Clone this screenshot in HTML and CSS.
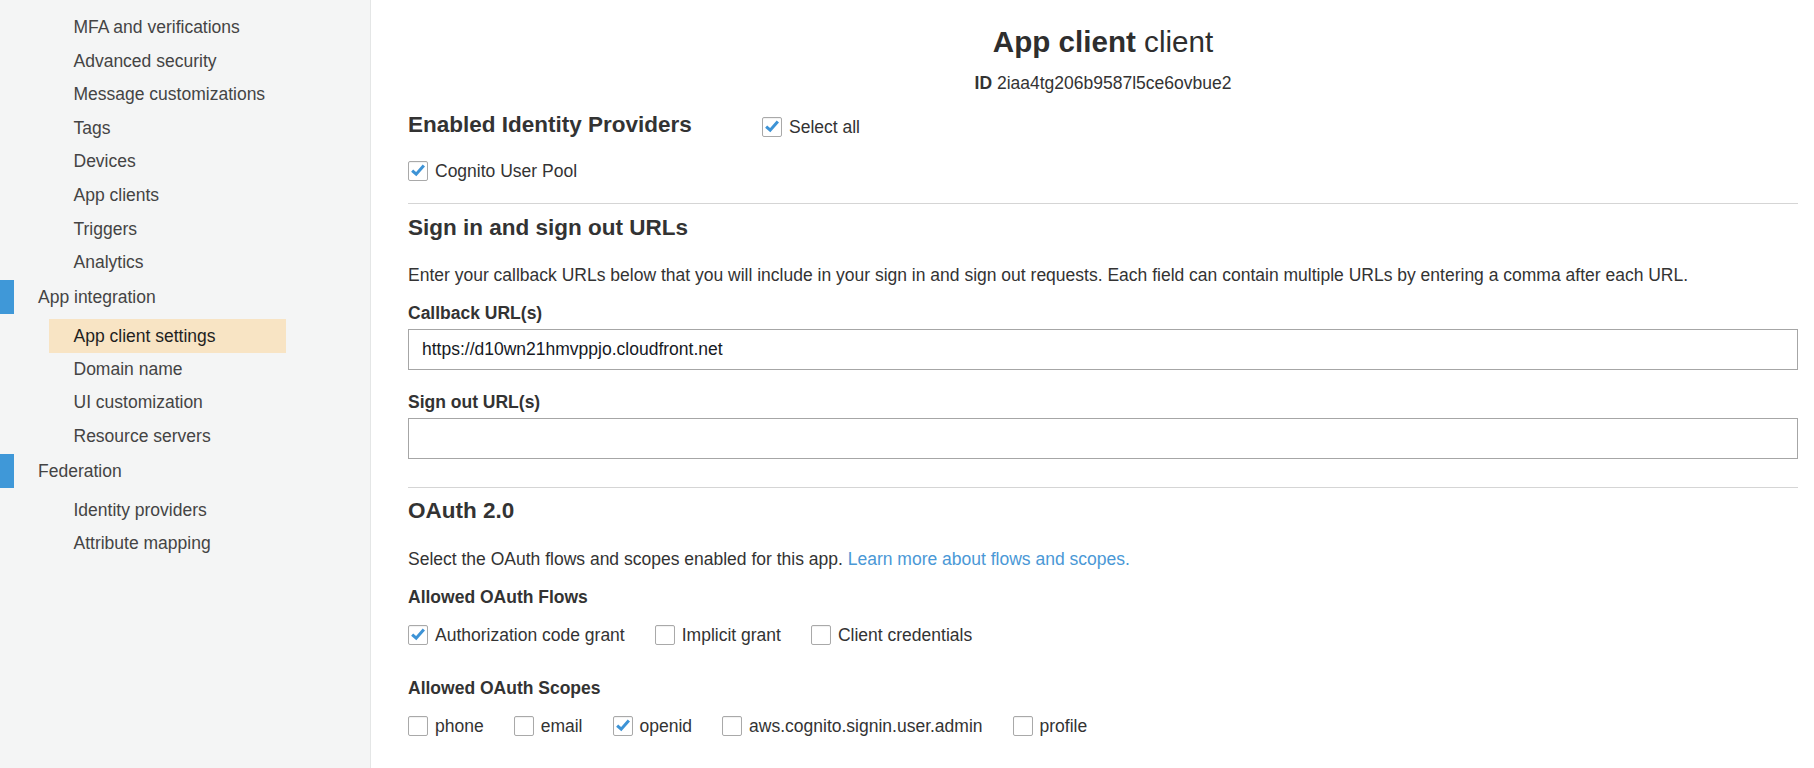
FILE: index.html
```html
<!DOCTYPE html>
<html lang="en">
<head>
<meta charset="utf-8">
<title>App client settings</title>
<link rel="stylesheet" href="styles.css">
</head>
<body>
<div class="layout">
  <nav class="sidebar">
    <ul class="sub">
      <li class="item">MFA and verifications</li>
      <li class="item">Advanced security</li>
      <li class="item">Message customizations</li>
      <li class="item">Tags</li>
      <li class="item">Devices</li>
      <li class="item">App clients</li>
      <li class="item">Triggers</li>
      <li class="item">Analytics</li>
    </ul>
    <div class="group">App integration</div>
    <ul class="sub after-group">
      <li class="item active">App client settings</li>
      <li class="item">Domain name</li>
      <li class="item">UI customization</li>
      <li class="item">Resource servers</li>
    </ul>
    <div class="group">Federation</div>
    <ul class="sub after-group2">
      <li class="item">Identity providers</li>
      <li class="item">Attribute mapping</li>
    </ul>
  </nav>
  <main class="main">
    <h1 class="title"><b>App client</b> client</h1>
    <div class="client-id"><b>ID</b> 2iaa4tg206b9587l5ce6ovbue2</div>

    <div class="idp-row">
      <h2 class="heading idp-heading">Enabled Identity Providers</h2>
      <label class="check"><span class="box checked"><svg viewBox="0 0 20 20"><path d="M3.5 9.5 L8 13.5 L16.5 4"/></svg></span>Select all</label>
    </div>
    <div class="row cognito">
      <label class="check"><span class="box checked"><svg viewBox="0 0 20 20"><path d="M3.5 9.5 L8 13.5 L16.5 4"/></svg></span>Cognito User Pool</label>
    </div>

    <hr class="rule rule1">
    <h2 class="heading sign-heading">Sign in and sign out URLs</h2>
    <p class="text desc1">Enter your callback URLs below that you will include in your sign in and sign out requests. Each field can contain multiple URLs by entering a comma after each URL.</p>
    <div class="label lbl1">Callback URL(s)</div>
    <input class="field" type="text" value="https://d10wn21hmvppjo.cloudfront.net">
    <div class="label lbl2">Sign out URL(s)</div>
    <input class="field" type="text" value="">

    <hr class="rule rule2">
    <h2 class="heading oauth-heading">OAuth 2.0</h2>
    <p class="text desc2">Select the OAuth flows and scopes enabled for this app. <a class="link" href="#">Learn more about flows and scopes.</a></p>
    <div class="label lbl3">Allowed OAuth Flows</div>
    <div class="row checks flows">
      <label class="check"><span class="box checked"><svg viewBox="0 0 20 20"><path d="M3.5 9.5 L8 13.5 L16.5 4"/></svg></span>Authorization code grant</label>
      <label class="check"><span class="box"></span>Implicit grant</label>
      <label class="check"><span class="box"></span>Client credentials</label>
    </div>
    <div class="label lbl4">Allowed OAuth Scopes</div>
    <div class="row checks scopes">
      <label class="check"><span class="box"></span>phone</label>
      <label class="check"><span class="box"></span>email</label>
      <label class="check"><span class="box checked"><svg viewBox="0 0 20 20"><path d="M3.5 9.5 L8 13.5 L16.5 4"/></svg></span>openid</label>
      <label class="check"><span class="box"></span>aws.cognito.signin.user.admin</label>
      <label class="check"><span class="box"></span>profile</label>
    </div>
  </main>
</div>
</body>
</html>
```

FILE: styles.css
```css
* { box-sizing: border-box; }
html, body {
  margin: 0;
  padding: 0;
  height: 100%;
  overflow: hidden;
  background: #ffffff;
}
body {
  font-family: "Liberation Sans", Arial, Helvetica, sans-serif;
  font-size: 17.5px;
  color: #333333;
}
.layout {
  display: flex;
  height: 768px;
}
.sidebar {
  width: 371px;
  flex: 0 0 371px;
  background: #f4f5f5;
  border-right: 1px solid #e4e6e6;
  padding-top: 11px;
  color: #444444;
}
.sub {
  list-style: none;
  margin: 0;
  padding: 0;
}
.item {
  height: 33.6px;
  line-height: 33.6px;
  margin-left: 49px;
  width: 237px;
  padding-left: 24.5px;
  white-space: nowrap;
}
.item.active {
  background: #f8e4c4;
  color: #1f1f1f;
  height: 34px;
  line-height: 34px;
}
.after-group { margin-top: 5px; }
.after-group2 { margin-top: 6px; }
.group {
  display: flex;
  align-items: center;
  height: 34px;
  line-height: 34px;
}
.group::before {
  content: "";
  width: 14px;
  height: 34px;
  background: #3f98d8;
  margin-right: 24px;
}
.main {
  flex: 1;
  padding: 25px 16px 0 37px;
}
.title {
  margin: 0;
  text-align: center;
  font-size: 29.6px;
  line-height: 34px;
  font-weight: normal;
  color: #2e2e2e;
}
.title b { font-weight: bold; }
.client-id {
  margin-top: 13px;
  text-align: center;
  line-height: 22px;
  color: #333;
}
.heading {
  margin: 0;
  font-size: 22.5px;
  line-height: 30px;
  font-weight: bold;
  color: #333;
}
.idp-row {
  display: flex;
  align-items: center;
  margin-top: 16px;
  height: 30px;
}
.idp-heading { width: 354px; }
.idp-row .check { margin-top: 4px; }
.row {
  display: flex;
  align-items: center;
  height: 22px;
}
.cognito { margin-top: 20px; }
.check {
  display: flex;
  align-items: center;
  line-height: 22px;
  color: #333;
  white-space: nowrap;
}
.box {
  width: 20px;
  height: 20px;
  border: 1px solid #a9a9a9;
  border-radius: 2px;
  background: #fff;
  margin-right: 7px;
  display: inline-flex;
  box-shadow: inset 0 1px 1px rgba(0,0,0,0.06);
}
.box svg {
  width: 18px;
  height: 18px;
}
.box svg path {
  fill: none;
  stroke: #3d93d6;
  stroke-width: 3.4;
  stroke-linecap: butt;
  stroke-linejoin: miter;
}
.rule {
  border: 0;
  border-top: 1px solid #d5d5d5;
  margin: 0;
  height: 0;
}
.rule1 { margin-top: 21px; }
.sign-heading { margin-top: 9px; }
.text {
  margin: 0;
  line-height: 22px;
  color: #333;
}
.desc1 { margin-top: 21px; }
.label {
  font-weight: bold;
  line-height: 22px;
  color: #333;
}
.lbl1 { margin-top: 16px; }
.lbl2 { margin-top: 21px; }
.field {
  display: block;
  width: 100%;
  height: 41px;
  margin-top: 5px;
  border: 1px solid #a6a6a6;
  border-radius: 0;
  padding: 0 13px;
  font-family: "Liberation Sans", Arial, Helvetica, sans-serif;
  font-size: 17.5px;
  color: #16191f;
  background: #fff;
  outline: none;
}
.rule2 { margin-top: 28px; }
.oauth-heading { margin-top: 8px; }
.desc2 { margin-top: 22px; }
.link {
  color: #4a98d6;
  text-decoration: none;
}
.lbl3 { margin-top: 16px; }
.checks { gap: 30px; }
.flows { margin-top: 16px; }
.lbl4 { margin-top: 31px; }
.scopes { margin-top: 16px; }
```
